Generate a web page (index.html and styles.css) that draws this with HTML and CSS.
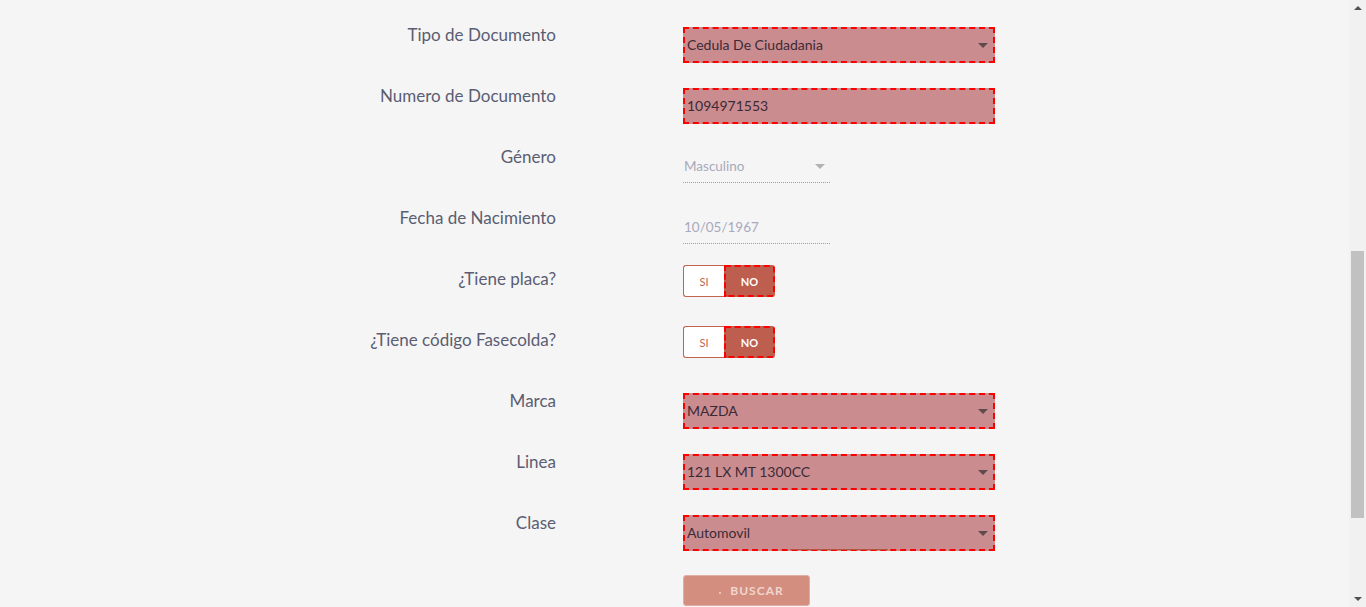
FILE: index.html
```html
<!DOCTYPE html>
<html lang="es">
<head>
<meta charset="utf-8">
<title>Formulario</title>
<link rel="stylesheet" href="styles.css">
</head>
<body>
<div class="page">
  <main class="content">
    <form class="form">
      <div class="row">
        <label class="label">Tipo de Documento</label>
        <div class="field"><div class="select hl"><span>Cedula De Ciudadania</span><i class="caret"></i></div></div>
      </div>
      <div class="row">
        <label class="label">Numero de Documento</label>
        <div class="field"><div class="select hl"><span>1094971553</span></div></div>
      </div>
      <div class="row">
        <label class="label">Género</label>
        <div class="field"><div class="plain"><span>Masculino</span><i class="caret light"></i></div></div>
      </div>
      <div class="row">
        <label class="label">Fecha de Nacimiento</label>
        <div class="field"><div class="plain"><span>10/05/1967</span></div></div>
      </div>
      <div class="row">
        <label class="label">¿Tiene placa?</label>
        <div class="field"><div class="toggle"><span class="si">SI</span><span class="no">NO</span></div></div>
      </div>
      <div class="row">
        <label class="label">¿Tiene código Fasecolda?</label>
        <div class="field"><div class="toggle"><span class="si">SI</span><span class="no">NO</span></div></div>
      </div>
      <div class="row">
        <label class="label">Marca</label>
        <div class="field"><div class="select hl"><span>MAZDA</span><i class="caret"></i></div></div>
      </div>
      <div class="row">
        <label class="label">Linea</label>
        <div class="field"><div class="select hl"><span>121 LX MT 1300CC</span><i class="caret"></i></div></div>
      </div>
      <div class="row">
        <label class="label">Clase</label>
        <div class="field"><div class="select hl"><span>Automovil</span><i class="caret"></i></div><div class="underline"></div></div>
      </div>
      <div class="row">
        <span class="label"></span>
        <div class="field"><button type="button" class="btn"><span class="dot"></span>BUSCAR</button></div>
      </div>
    </form>
  </main>
  <div class="scrollbar">
    <div class="arrow up"></div>
    <div class="track"><div class="thumb"></div></div>
    <div class="arrow down"></div>
  </div>
</div>
</body>
</html>
```

FILE: styles.css
```css
* { box-sizing: border-box; }
html, body { margin: 0; padding: 0; height: 100%; overflow: hidden; }
body {
  background: #f5f5f5;
  font-family: Lato, "Noto Sans", sans-serif;
}
.page {
  display: flex;
  height: 607px;
}
.content {
  flex: 1;
  padding-top: 27px;
}
.form {
  display: grid;
  grid-template-columns: 556px 312px;
  column-gap: 127px;
  grid-auto-rows: 61px;
}
.row { display: contents; }
.label {
  text-align: right;
  color: #5b5d72;
  font-size: 17px;
  line-height: 20px;
  margin-top: -2px;
}
.field { position: relative; }
.select {
  height: 36px;
  width: 312px;
  display: flex;
  align-items: center;
  justify-content: space-between;
  padding: 0 5px 1px 2px;
  font-size: 14px;
  color: #3b2a36;
}
.hl {
  background: #cb8c8f;
  border: 2px dashed #ff0000;
}
.caret {
  width: 0; height: 0;
  border-left: 5px solid transparent;
  border-right: 5px solid transparent;
  border-top: 5px solid #5f4a4c;
  margin-top: 2px;
}
.caret.light { border-top-color: #b3b3b3; margin-right: 5px; }
.plain {
  width: 147px;
  height: 34px;
  display: flex;
  align-items: center;
  justify-content: space-between;
  padding-left: 1px;
  font-size: 13.5px;
  color: #a9a9bb;
  border-bottom: 1px dotted #a0a0a0;
}
.toggle {
  display: flex;
  width: 92px;
  height: 32px;
  margin-top: -6px;
  font-size: 11px;
}
.toggle .si {
  width: 41px;
  display: flex; align-items: center; justify-content: center;
  background: #fff;
  color: #bf6450;
  border: 1px solid #c0644f;
  border-right: none;
  border-radius: 3px 0 0 3px;
}
.toggle .no {
  flex: 1;
  display: flex; align-items: center; justify-content: center;
  background: #bd5e4e;
  color: #fff;
  font-weight: bold;
  border: 2px dashed #ff0000;
  border-radius: 0 3px 3px 0;
}
.underline {
  width: 98px;
  height: 1px;
  margin: -2px 0 0 107px;
  background: #b0583f;
}
.btn {
  width: 127px;
  height: 31px;
  margin-top: -1px;
  background: #d38e80;
  border: 1px solid #ddb0a6;
  border-radius: 3px;
  color: #f1d6cf;
  font-family: Lato, "Noto Sans", sans-serif;
  font-weight: bold;
  font-size: 12px;
  letter-spacing: 1px;
  display: flex;
  align-items: center;
  justify-content: center;
  padding: 0 0 0 10px;
}
.dot {
  width: 2px; height: 2px;
  background: #f1d6cf;
  border-radius: 50%;
  margin: 4px 9px 0 0;
}
.scrollbar {
  width: 17px;
  background: #f1f1f1;
  display: flex;
  flex-direction: column;
  align-items: center;
}
.arrow {
  width: 0; height: 0;
  border-left: 4px solid transparent;
  border-right: 4px solid transparent;
}
.arrow.up { border-bottom: 4px solid #505050; margin-top: 6px; }
.arrow.down { border-top: 4px solid #505050; margin-bottom: 6px; }
.track {
  flex: 1;
  width: 100%;
  padding-top: 241px;
}
.thumb {
  width: 13px;
  height: 267px;
  margin-left: 2px;
  background: #c1c1c1;
}
```
